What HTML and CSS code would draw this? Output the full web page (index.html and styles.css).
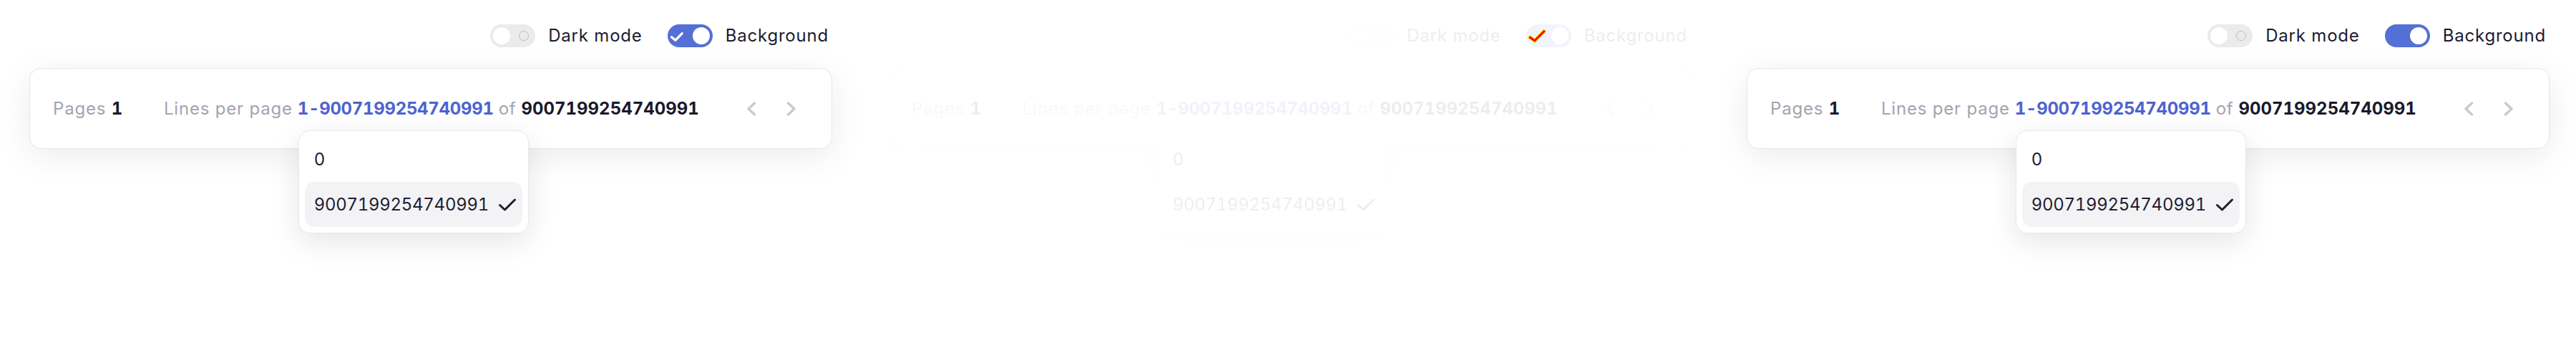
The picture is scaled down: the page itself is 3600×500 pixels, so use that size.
FILE: index.html
```html
<!DOCTYPE html>
<html>
<head>
<meta charset="utf-8">
<link rel="stylesheet" href="styles.css">
</head>
<body>
<div class="stage">
  <section class="panel">
    <div class="toggles">
      <label class="tg">
        <span class="switch off"><span class="knob"></span><span class="ring"></span></span>
        <span class="tg-label">Dark mode</span>
      </label>
      <label class="tg">
        <span class="switch on"><svg class="tick" width="26" height="32" viewBox="0 0 26 32"><path d="M5.5 17.7 L11 22.2 L20.3 12.7" fill="none" stroke="#fff" stroke-width="3.2" stroke-linecap="round" stroke-linejoin="round"/></svg><span class="knob"></span></span>
        <span class="tg-label">Background</span>
      </label>
    </div>
    <div class="card">
      <div class="pages"><span class="muted">Pages</span> <b class="strong num">1</b></div>
      <div class="lines">
        <span class="muted">Lines per page</span>
        <span class="value-wrap">
          <span class="value num">1-9007199254740991</span>
          <div class="menu">
            <div class="item num">0</div>
            <div class="item sel num"><span>9007199254740991</span><svg class="mcheck" width="26" height="20" viewBox="0 0 26 20"><path d="M2.5 10.5 L9.5 17 L23.5 3" fill="none" stroke="#1d1d2f" stroke-width="3" stroke-linecap="round" stroke-linejoin="round"/></svg></div>
          </div>
        </span>
        <span class="muted">of</span>
        <b class="strong num total">9007199254740991</b>
      </div>
      <div class="nav">
        <button class="navbtn"><svg width="14" height="20" viewBox="0 0 14 20"><path d="M11.5 2 L3 10 L11.5 18" fill="none" stroke="currentColor" stroke-width="3.4" stroke-linecap="round" stroke-linejoin="round"/></svg></button>
        <button class="navbtn"><svg width="14" height="20" viewBox="0 0 14 20"><path d="M2.5 2 L11 10 L2.5 18" fill="none" stroke="currentColor" stroke-width="3.4" stroke-linecap="round" stroke-linejoin="round"/></svg></button>
      </div>
    </div>
  </section>

  <section class="panel ghost-wrap">
    <div class="ghost">
      <div class="toggles">
        <label class="tg">
          <span class="switch off"><span class="knob"></span><span class="ring"></span></span>
          <span class="tg-label">Dark mode</span>
        </label>
        <label class="tg">
          <span class="switch grey"><span class="knob"></span></span>
          <span class="tg-label">Background</span>
        </label>
      </div>
      <div class="card">
        <div class="pages"><span class="muted">Pages</span> <b class="strong num">1</b></div>
        <div class="lines">
          <span class="muted">Lines per page</span>
          <span class="value-wrap">
            <span class="value num">1-9007199254740991</span>
            <div class="menu">
              <div class="item num">0</div>
              <div class="item num"><span>9007199254740991</span><svg class="mcheck" width="26" height="20" viewBox="0 0 26 20"><path d="M2.5 10.5 L9.5 17 L23.5 3" fill="none" stroke="#1d1d2f" stroke-width="3" stroke-linecap="round" stroke-linejoin="round"/></svg></div>
            </div>
          </span>
          <span class="muted">of</span>
          <b class="strong num total">9007199254740991</b>
        </div>
        <div class="nav">
          <button class="navbtn"><svg width="14" height="20" viewBox="0 0 14 20"><path d="M11.5 2 L3 10 L11.5 18" fill="none" stroke="currentColor" stroke-width="3.4" stroke-linecap="round" stroke-linejoin="round"/></svg></button>
          <button class="navbtn"><svg width="14" height="20" viewBox="0 0 14 20"><path d="M2.5 2 L11 10 L2.5 18" fill="none" stroke="currentColor" stroke-width="3.4" stroke-linecap="round" stroke-linejoin="round"/></svg></button>
        </div>
      </div>
    </div>
    <svg class="redtick" width="28" height="32" viewBox="0 0 28 32"><path d="M5.4 18.3 L11.7 22.8 L24.7 9.9" fill="none" stroke="#ffe600" stroke-width="5.2" stroke-linecap="square" stroke-linejoin="miter"/><path d="M5.4 18.3 L11.7 22.8 L24.7 9.9" fill="none" stroke="#f01010" stroke-width="3" stroke-linecap="square" stroke-linejoin="miter"/></svg>
  </section>

  <section class="panel">
    <div class="toggles">
      <label class="tg">
        <span class="switch off"><span class="knob"></span><span class="ring"></span></span>
        <span class="tg-label">Dark mode</span>
      </label>
      <label class="tg">
        <span class="switch on"><span class="knob"></span></span>
        <span class="tg-label">Background</span>
      </label>
    </div>
    <div class="card">
      <div class="pages"><span class="muted">Pages</span> <b class="strong num">1</b></div>
      <div class="lines">
        <span class="muted">Lines per page</span>
        <span class="value-wrap">
          <span class="value num">1-9007199254740991</span>
          <div class="menu">
            <div class="item num">0</div>
            <div class="item sel num"><span>9007199254740991</span><svg class="mcheck" width="26" height="20" viewBox="0 0 26 20"><path d="M2.5 10.5 L9.5 17 L23.5 3" fill="none" stroke="#1d1d2f" stroke-width="3" stroke-linecap="round" stroke-linejoin="round"/></svg></div>
          </div>
        </span>
        <span class="muted">of</span>
        <b class="strong num total">9007199254740991</b>
      </div>
      <div class="nav">
        <button class="navbtn"><svg width="14" height="20" viewBox="0 0 14 20"><path d="M11.5 2 L3 10 L11.5 18" fill="none" stroke="currentColor" stroke-width="3.4" stroke-linecap="round" stroke-linejoin="round"/></svg></button>
        <button class="navbtn"><svg width="14" height="20" viewBox="0 0 14 20"><path d="M2.5 2 L11 10 L2.5 18" fill="none" stroke="currentColor" stroke-width="3.4" stroke-linecap="round" stroke-linejoin="round"/></svg></button>
      </div>
    </div>
  </section>
</div>
</body>
</html>
```

FILE: styles.css
```css
* { box-sizing: border-box; }
html, body { margin: 0; padding: 0; background: #fff; }
body {
  font-family: Inter, "Noto Sans", "Liberation Sans", sans-serif;
  color: #1c1c30;
  letter-spacing: 0.8px;
}
.num {
  font-variant-numeric: tabular-nums;
  font-feature-settings: "tnum" 1;
  letter-spacing: -0.3px;
}
.num.total { letter-spacing: 0; }
.stage {
  display: flex;
  width: 3600px;
  height: 500px;
}
.panel {
  flex: 0 0 1200px;
  height: 500px;
  padding: 34px 37px 0 41px;
}
.ghost-wrap { position: relative; }
.ghost { opacity: 0.08; }
.redtick {
  position: absolute;
  left: 933px;
  top: 34px;
}

.toggles {
  display: flex;
  justify-content: flex-end;
  align-items: center;
  gap: 35px;
  height: 32px;
  padding-right: 5px;
}
.tg {
  display: flex;
  align-items: center;
  gap: 18px;
}
.tg-label {
  font-size: 24px;
  line-height: 32px;
  color: #1c1c30;
}
.switch {
  position: relative;
  display: flex;
  align-items: center;
  width: 63px;
  height: 32px;
  border-radius: 16px;
  padding: 0 4px;
}
.switch.off { background: #ebebeb; justify-content: space-between; }
.switch.on { background: #5470d6; justify-content: flex-end; }
.switch.grey { background: #5470d6; justify-content: flex-end; }
.knob {
  width: 24px;
  height: 24px;
  border-radius: 50%;
  background: #fff;
}
.ring {
  width: 14px;
  height: 14px;
  border-radius: 50%;
  border: 1.5px solid #bdbdc2;
  margin-right: 5px;
}
.tick {
  position: absolute;
  left: 0;
  top: 0;
}

.card {
  margin-top: 29px;
  height: 113px;
  width: 1122px;
  border: 1px solid #e6e6e8;
  border-radius: 16px;
  background: #fff;
  box-shadow: 0 10px 48px rgba(0, 0, 0, 0.08);
  display: flex;
  align-items: center;
  padding: 0 35px 0 32px;
  font-size: 24px;
}
.muted { color: #a3a3b1; }
.strong { font-weight: 700; color: #19192b; }
.pages { white-space: nowrap; }
.lines {
  margin-left: 58px;
  display: flex;
  align-items: baseline;
  gap: 7px;
  white-space: nowrap;
}
.value-wrap { position: relative; }
.value { color: #4d63cf; font-weight: 700; }
.menu {
  position: absolute;
  left: 1px;
  top: calc(100% + 16px);
  width: 322px;
  background: #fff;
  border: 1px solid #e8e8ea;
  border-radius: 16px;
  padding: 8px;
  box-shadow: 0 12px 40px rgba(0, 0, 0, 0.1);
  z-index: 2;
}
.item {
  height: 63px;
  display: flex;
  align-items: center;
  padding: 0 12px 0 13px;
  border-radius: 14px;
  color: #1e1e32;
  font-size: 24px;
  white-space: nowrap;
}
.item.sel { background: #f3f3f5; }
.mcheck { margin-left: 13px; flex-shrink: 0; }

.nav {
  margin-left: auto;
  display: flex;
  gap: 14px;
}
.navbtn {
  border: 0;
  background: none;
  padding: 0 14px;
  color: #c9c9d1;
  display: flex;
  align-items: center;
}
```
